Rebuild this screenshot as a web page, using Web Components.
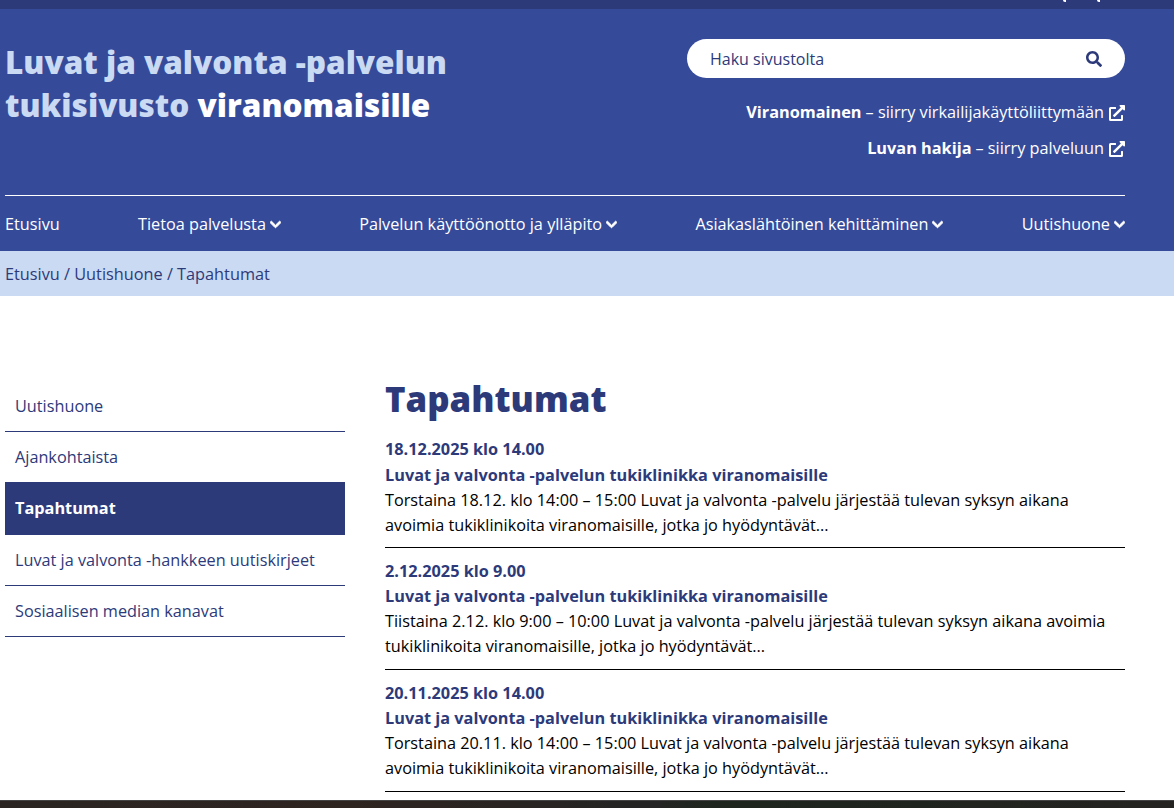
<!DOCTYPE html>
<html lang="fi">
<head>
<meta charset="utf-8">
<title>Tapahtumat</title>
<style>
html, body { margin: 0; padding: 0; height: 808px; overflow: hidden; background: #fff; }
body { font-family: "Open Sans", "Liberation Sans", sans-serif; font-size: 16.25px; color: #000; }
</style>
</head>
<body>
<site-header>
  <header-link slot="links" who="Viranomainen" what="– siirry virkailijakäyttöliittymään"></header-link>
  <header-link slot="links" who="Luvan hakija" what="– siirry palveluun"></header-link>
  <nav-item slot="nav">Etusivu</nav-item>
  <nav-item slot="nav" drop>Tietoa palvelusta</nav-item>
  <nav-item slot="nav" drop>Palvelun käyttöönotto ja ylläpito</nav-item>
  <nav-item slot="nav" drop>Asiakaslähtöinen kehittäminen</nav-item>
  <nav-item slot="nav" drop>Uutishuone</nav-item>
</site-header>
<crumb-bar>Etusivu / Uutishuone / Tapahtumat</crumb-bar>
<page-body>
  <side-link slot="side">Uutishuone</side-link>
  <side-link slot="side">Ajankohtaista</side-link>
  <side-link slot="side" active>Tapahtumat</side-link>
  <side-link slot="side">Luvat ja valvonta -hankkeen uutiskirjeet</side-link>
  <side-link slot="side">Sosiaalisen median kanavat</side-link>
  <event-item date="18.12.2025 klo 14.00" name="Luvat ja valvonta -palvelun tukiklinikka viranomaisille">Torstaina 18.12. klo 14:00 – 15:00 Luvat ja valvonta -palvelu järjestää tulevan syksyn aikana avoimia tukiklinikoita viranomaisille, jotka jo hyödyntävät...</event-item>
  <event-item date="2.12.2025 klo 9.00" name="Luvat ja valvonta -palvelun tukiklinikka viranomaisille">Tiistaina 2.12. klo 9:00 – 10:00 Luvat ja valvonta -palvelu järjestää tulevan syksyn aikana avoimia tukiklinikoita viranomaisille, jotka jo hyödyntävät...</event-item>
  <event-item date="20.11.2025 klo 14.00" name="Luvat ja valvonta -palvelun tukiklinikka viranomaisille">Torstaina 20.11. klo 14:00 – 15:00 Luvat ja valvonta -palvelu järjestää tulevan syksyn aikana avoimia tukiklinikoita viranomaisille, jotka jo hyödyntävät...</event-item>
</page-body>
<div style="height:8px;background:linear-gradient(90deg,#2a2522,#2e2420 30%,#242424 55%,#1d251d 62%,#242321);box-shadow:inset 0 1px 0 #444"></div>

<script>
const SEARCH = 'M505 442.7L405.3 343c-4.5-4.5-10.6-7-17-7H372c27.6-35.3 44-79.7 44-128C416 93.1 322.9 0 208 0S0 93.1 0 208s93.1 208 208 208c48.3 0 92.7-16.4 128-44v16.3c0 6.4 2.5 12.5 7 17l99.7 99.7c9.4 9.4 24.6 9.4 33.9 0l28.3-28.3c9.4-9.4 9.4-24.6.1-34zM208 336c-70.7 0-128-57.2-128-128 0-70.7 57.2-128 128-128 70.7 0 128 57.2 128 128 0 70.7-57.2 128-128 128z';
const CHEVRON = 'M207.029 381.476L12.686 187.132c-9.373-9.373-9.373-24.569 0-33.941l22.667-22.667c9.357-9.357 24.522-9.375 33.901-.04L224 284.505l154.745-154.021c9.379-9.335 24.544-9.317 33.901.04l22.667 22.667c9.373 9.373 9.373 24.569 0 33.941L240.971 381.476c-9.373 9.372-24.569 9.372-33.942 0z';
const EXTERNAL = 'M432,320H400a16,16,0,0,0-16,16V448H64V128H208a16,16,0,0,0,16-16V80a16,16,0,0,0-16-16H48A48,48,0,0,0,0,112V464a48,48,0,0,0,48,48H400a48,48,0,0,0,48-48V336A16,16,0,0,0,432,320ZM488,0h-128c-21.37,0-32.05,25.91-17,41l35.73,35.73L135,320.37a24,24,0,0,0,0,34L157.67,377a24,24,0,0,0,34,0L435.28,133.32,471,169c15,15,41,4.5,41-17V24A24,24,0,0,0,488,0Z';

class SiteHeader extends HTMLElement {
  constructor() {
    super();
    const root = this.attachShadow({ mode: 'open' });
    root.innerHTML = `<style>
      :host { display: block; background: #364a9a; color: #fff; }
      /* only the tails of the clipped top bar text are visible in the shot */
      .top { height: 9px; background: #2d3a7a; display: flex; justify-content: flex-end; gap: 31px; padding-right: 74px; }
      .top i { width: 3px; height: 2px; background: #fff; border-bottom-left-radius: 2px; }
      .wrap { width: 1120px; margin-left: 5px; height: 242px; display: flex; flex-direction: column; }
      .head { display: flex; justify-content: space-between; height: 186px; border-bottom: 1px solid #fff; }
      h1 { margin: 31px 0 0; font-size: 31.5px; line-height: 43px; font-weight: 800; color: #c9daf2; white-space: nowrap; }
      h1 div { height: 43px; }
      h1 b { color: #fff; font-weight: 800; }
      .right { width: 438px; padding-top: 30px; display: flex; flex-direction: column; align-items: stretch; }
      .search { height: 39px; border-radius: 20px; background: #fff; color: #2d3a7a; font-size: 16px; display: flex; align-items: center; justify-content: space-between; padding: 0 23px 0 23px; margin-bottom: 16px; }
      .search svg { width: 16px; height: 16px; fill: #2d3a7a; }
      nav { flex: 1; display: flex; justify-content: space-between; align-items: center; }
    </style>
    <div class="top"><i></i><i></i></div>
    <div class="wrap">
      <div class="head">
        <h1><div>Luvat ja valvonta -palvelun</div><div>tukisivusto <b>viranomaisille</b></div></h1>
        <div class="right">
          <div class="search"><span>Haku sivustolta</span><svg viewBox="0 0 512 512"><path d="${SEARCH}"/></svg></div>
          <slot name="links"></slot>
        </div>
      </div>
      <nav><slot name="nav"></slot></nav>
    </div>`;
  }
}

class HeaderLink extends HTMLElement {
  constructor() {
    super();
    this.attachShadow({ mode: 'open' });
  }
  connectedCallback() {
    this.shadowRoot.innerHTML = `<style>
      :host { display: flex; height: 36px; align-items: center; justify-content: flex-end; color: #fff; white-space: nowrap; font-size: 16.3px; }
      b { font-weight: 700; margin-right: 4px; }
      svg { width: 16px; height: 16px; fill: #fff; margin-left: 5px; margin-top: 1px; }
    </style><b>${this.getAttribute('who')}</b><span>${this.getAttribute('what')}</span><svg viewBox="0 0 512 512"><path d="${EXTERNAL}"/></svg>`;
  }
}

class NavItem extends HTMLElement {
  constructor() {
    super();
    const root = this.attachShadow({ mode: 'open' });
    root.innerHTML = `<style>
      :host { display: inline-flex; align-items: center; color: #fff; white-space: nowrap; font-size: 16.25px; }
      svg { width: 11px; height: 13px; fill: #fff; stroke: #fff; stroke-width: 40; margin-left: 4px; margin-top: 1px; display: none; }
      :host([drop]) svg { display: block; }
    </style><slot></slot><svg viewBox="0 0 448 512"><path d="${CHEVRON}"/></svg>`;
  }
}

class CrumbBar extends HTMLElement {
  constructor() {
    super();
    const root = this.attachShadow({ mode: 'open' });
    root.innerHTML = `<style>
      :host { display: flex; align-items: center; height: 45px; padding-left: 5px; background: #c9daf2; color: #2d3a7a; font-size: 16.3px; }
    </style><slot></slot>`;
  }
}

class PageBody extends HTMLElement {
  constructor() {
    super();
    const root = this.attachShadow({ mode: 'open' });
    root.innerHTML = `<style>
      :host { display: grid; grid-template-columns: 340px 740px; column-gap: 40px; height: 504px; padding-left: 5px; overflow: hidden; }
      aside { padding-top: 85px; }
      main { padding-top: 80px; }
      h1 { margin: 0 0 14px; font-size: 34.8px; line-height: 46px; font-weight: 800; color: #2d3a7a; }
    </style>
    <aside><slot name="side"></slot></aside>
    <main><h1>Tapahtumat</h1><slot></slot></main>`;
  }
}

class SideLink extends HTMLElement {
  constructor() {
    super();
    const root = this.attachShadow({ mode: 'open' });
    root.innerHTML = `<style>
      :host { display: flex; align-items: center; box-sizing: border-box; height: 51px; padding: 0 10px; border-bottom: 1px solid #2d3a7a; color: #2d3a7a; }
      :host([active]) { height: 53px; margin-top: -1px; padding-bottom: 2px; border-bottom: 0; background: #2d3a7a; color: #fff; font-weight: 700; font-size: 16.3px; }
    </style><slot></slot>`;
  }
}

class EventItem extends HTMLElement {
  constructor() {
    super();
    this.attachShadow({ mode: 'open' });
  }
  connectedCallback() {
    this.shadowRoot.innerHTML = `<style>
      :host { display: block; box-sizing: border-box; height: 112px; margin-bottom: 10px; border-bottom: 1px solid #000; line-height: 25px; }
      .date, .name { font-weight: 700; font-size: 16.3px; color: #2d3a7a; }
      .date { line-height: 26px; }
      :host(:first-of-type) .name { margin-top: 1px; }
    </style>
    <div class="date">${this.getAttribute('date')}</div>
    <div class="name">${this.getAttribute('name')}</div>
    <div><slot></slot></div>`;
  }
}

customElements.define('site-header', SiteHeader);
customElements.define('header-link', HeaderLink);
customElements.define('nav-item', NavItem);
customElements.define('crumb-bar', CrumbBar);
customElements.define('page-body', PageBody);
customElements.define('side-link', SideLink);
customElements.define('event-item', EventItem);
</script>
</body>
</html>
